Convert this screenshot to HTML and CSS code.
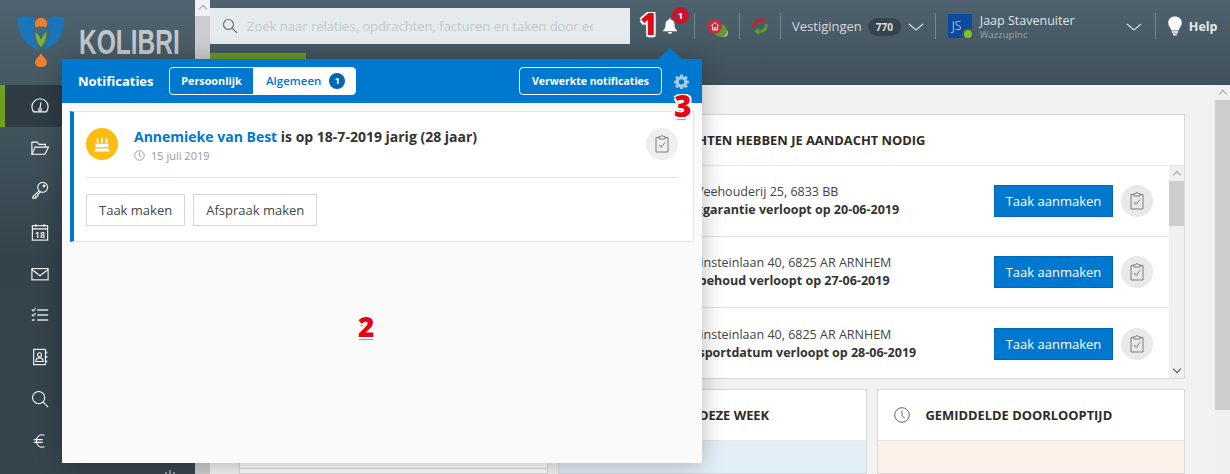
FILE: index.html
```html
<!DOCTYPE html>
<html lang="nl">
<head>
<meta charset="utf-8">
<title>Kolibri</title>
<link rel="stylesheet" href="styles.css">
</head>
<body>
<div class="app">
  <aside class="sidebar">
    <div class="logo">
      <svg class="logo-mark" viewBox="0 0 50 54" width="50" height="54">
        <path d="M2 2C10 0.500 17 1.500 20 6C17 12 16 19 19 27C20 30 21 32 22 35C11 31 1 21 2 2Z" fill="#1b75bb"/>
        <path d="M48 2C40 0.500 33 1.500 30 6C33 12 34 19 31 27C30 30 29 32 28 35C39 31 49 21 48 2Z" fill="#1b75bb"/>
        <circle cx="25" cy="9" r="6.200" fill="#ee7f2d"/>
        <path d="M25 12C30 10 33.500 15 33 22C32.500 27 29 31 25 34C21 31 17.500 27 17 22C16.500 15 20 10 25 12Z" fill="#3d6a86"/>
        <path d="M25 32C21.500 28 19.500 24 19.500 17C22 18.500 24 22 25 25C26 22 28 18.500 30.500 17C30.500 24 28.500 28 25 32Z" fill="#7fb02f"/>
        <path d="M25 38C27 42 31 44 31 47.500C31 50.500 28 52 25 52C22 52 19 50.500 19 47.500C19 44 23 42 25 38Z" fill="#ee7f2d"/>
      </svg>
      <span class="brand">KOLIBRI</span>
    </div>
    <nav class="nav">
      <a class="nav-item active"><svg viewBox="0 0 20 20"><path d="M3 16.500h14C18.500 14.500 19 12.500 19 11A9 9 0 0 0 1 11C1 12.500 1.500 14.500 3 16.500Z"/><circle cx="10" cy="14" r="1.500"/><path d="M10 12.500L11 6"/></svg></a>
      <a class="nav-item"><svg viewBox="0 0 20 20"><path d="M1 17V3.500h6l2 2.500h7v3"/><path d="M1 17L4.500 9H19.500L15.500 17Z"/></svg></a>
      <a class="nav-item"><svg viewBox="0 0 20 20"><circle cx="13" cy="7" r="5.500"/><circle cx="14.500" cy="5.500" r="1"/><path d="M9 11L2 17.500V19H5.500V17H7.500V15L10.500 12.500"/></svg></a>
      <a class="nav-item"><svg viewBox="0 0 20 20"><rect x="1.500" y="3" width="17" height="16"/><path d="M1.500 6.500H18.500M5.500 1V4.500M14.500 1V4.500"/><text x="10" y="16.800" class="cal">18</text></svg></a>
      <a class="nav-item"><svg viewBox="0 0 20 20"><rect x="1" y="4" width="18" height="12.500"/><path d="M1 5L10 12L19 5"/></svg></a>
      <a class="nav-item"><svg viewBox="0 0 20 20"><path d="M1 4L2.500 5.500L5 2.500M1 9.500L2.500 11L5 8"/><path class="thick" d="M7 4.500H19M7 10H19M7 15.500H19M1 15.500H4"/></svg></a>
      <a class="nav-item"><svg viewBox="0 0 20 20"><rect x="3" y="1.500" width="13" height="17"/><circle cx="9.500" cy="7.500" r="2.200"/><path d="M5.500 15C5.500 12 7 11 9.500 11S13.500 12 13.500 15Z"/><path d="M17.500 4V6M17.500 9V11M17.500 14V16"/></svg></a>
      <a class="nav-item"><svg viewBox="0 0 20 20"><circle cx="8.500" cy="8.500" r="6.800"/><path d="M13.500 13.500L19 19"/></svg></a>
      <a class="nav-item"><svg viewBox="0 0 20 20"><path d="M15 3.500C10 2 6 5 6 10S10 18 15 16.500M3 8.500H13M3 11.500H13"/></svg></a>
    </nav>
    <svg class="side-foot" viewBox="0 0 12 4" width="12" height="4"><path d="M5 0h2v4H5zM1 2h2v2H1zM9 2h2v2H9z"/></svg>
  </aside>
  <div class="side-scroll"><span class="arrow-up"></span><div class="side-thumb"></div></div>
  <div class="main">
    <header class="topbar">
      <div class="top-row">
        <div class="search">
          <svg class="search-icon" viewBox="0 0 16 16" width="16" height="16"><circle cx="6.500" cy="6.500" r="5"/><path d="M10.200 10.200L15 15"/></svg>
          <span class="placeholder">Zoek naar relaties, opdrachten, facturen en taken door een zoekterm in te voeren</span>
        </div>
        <div class="bell">
          <svg viewBox="0 0 16 16" width="16" height="16"><path d="M8 0.500C8.800 0.500 9.200 1 9.200 1.800C11.500 2.400 12.500 4 12.500 6.500C12.500 10 13.500 11 15 12.500V13.300H1V12.500C2.500 11 3.500 10 3.500 6.500C3.500 4 4.500 2.400 6.800 1.800C6.800 1 7.200 0.500 8 0.500ZM6 14H10C10 15 9 16 8 16S6 15 6 14Z"/></svg>
          <span class="bell-badge">1</span>
        </div>
        <span class="sep sep-bell"></span>
        <div class="status">
          <span class="dot dot-gray"></span><span class="dot dot-green"></span><span class="dot dot-red"></span>
          <svg class="status-house" viewBox="0 0 10 10" width="10" height="10"><path d="M1 5L5 1.500L9 5M2.500 4.500V9H7.500V4.500M4 9V6.500H6V9"/></svg>
        </div>
        <span class="sep"></span>
        <svg class="sync" viewBox="0 0 18 18" width="18" height="18"><path d="M3 11C2 6 6 2.500 11 3.500" stroke="#c8232c"/><path d="M10.500 0L15 3.800L10 7Z" fill="#c8232c"/><path d="M15 7C16 12 12 15.500 7 14.500" stroke="#5c9a32"/><path d="M8 11L3 14.200L8 18Z" fill="#5c9a32"/></svg>
        <span class="sep"></span>
        <span class="vest">Vestigingen</span>
        <span class="pill">770</span>
        <svg class="chev" viewBox="0 0 16 8" width="16" height="8"><path d="M1 1L8 7L15 1"/></svg>
        <span class="sep sep-user"></span>
        <div class="avatar">JS<span class="online"></span></div>
        <div class="user">
          <span class="user-name">Jaap Stavenuiter</span>
          <span class="user-org">WazzupInc</span>
        </div>
        <svg class="chev chev-user" viewBox="0 0 16 8" width="16" height="8"><path d="M1 1L8 7L15 1"/></svg>
        <span class="sep sep-help"></span>
        <svg class="bulb" viewBox="0 0 14 20" width="14" height="20"><path d="M7 0.500C11 0.500 13.800 3 13.800 6.800C13.800 10 11.500 11.500 10.500 14.500H3.500C2.500 11.500 0.200 10 0.200 6.800C0.200 3 3 0.500 7 0.500ZM3.800 15.300H10.200V16.800H3.800ZM4.500 17.500H9.500L8.500 19.500H5.500Z"/></svg>
        <span class="help">Help</span>
      </div>
      <div class="tab-row"><span class="tab-active"></span></div>
    </header>
    <div class="body-row">
      <div class="content">
        <section class="col-left">
          <div class="card card-left"></div>
          <div class="card card-left-next"></div>
        </section>
        <section class="col-right">
          <div class="card card-big">
            <h2 class="card-title">Deze opdrachten hebben je aandacht nodig</h2>
            <div class="rows">
              <div class="row-list">
                <div class="row">
                  <div class="row-text"><span>Aan de Oud Veehouderij 25, 6833 BB</span><strong>Project bankgarantie verloopt op 20-06-2019</strong></div>
                  <a class="btn-primary">Taak aanmaken</a>
                  <span class="round"><svg class="clip" viewBox="0 0 14 18"><path d="M4 2.500H1V17H13V2.500H10"/><path d="M4 1.500H5.500C5.500 0.500 8.500 0.500 8.500 1.500H10V4H4Z"/><path d="M4 10L6 12.500L10 7.500"/></svg></span>
                </div>
                <div class="row">
                  <div class="row-text"><span>Prof. Albert Einsteinlaan 40, 6825 AR ARNHEM</span><strong>Kopers voorbehoud verloopt op 27-06-2019</strong></div>
                  <a class="btn-primary">Taak aanmaken</a>
                  <span class="round"><svg class="clip" viewBox="0 0 14 18"><path d="M4 2.500H1V17H13V2.500H10"/><path d="M4 1.500H5.500C5.500 0.500 8.500 0.500 8.500 1.500H10V4H4Z"/><path d="M4 10L6 12.500L10 7.500"/></svg></span>
                </div>
                <div class="row">
                  <div class="row-text"><span>Prof. Albert Einsteinlaan 40, 6825 AR ARNHEM</span><strong>Project transportdatum verloopt op 28-06-2019</strong></div>
                  <a class="btn-primary">Taak aanmaken</a>
                  <span class="round"><svg class="clip" viewBox="0 0 14 18"><path d="M4 2.500H1V17H13V2.500H10"/><path d="M4 1.500H5.500C5.500 0.500 8.500 0.500 8.500 1.500H10V4H4Z"/><path d="M4 10L6 12.500L10 7.500"/></svg></span>
                </div>
              </div>
              <div class="row-scroll"><span class="arrow-up"></span><div class="row-thumb"></div><span class="arrow-down"></span></div>
            </div>
          </div>
          <div class="stat-grid">
            <div class="card stat">
              <h2 class="card-title">Opdrachten deze week</h2>
              <div class="stat-body tint-blue"></div>
            </div>
            <div class="card stat">
              <h2 class="card-title"><svg class="title-clock" viewBox="0 0 16 16" width="16" height="16"><circle cx="8" cy="8" r="7.300"/><path d="M8 3.500V8.500L10.500 11"/></svg>Gemiddelde doorlooptijd</h2>
              <div class="stat-body tint-orange"></div>
            </div>
          </div>
        </section>
      </div>
      <div class="page-scroll"><span class="arrow-up"></span><div class="page-thumb"></div></div>
    </div>
  </div>
</div>

<div class="popup">
  <span class="popup-arrow"></span>
  <div class="popup-head">
    <span class="popup-title">Notificaties</span>
    <div class="toggle">
      <span class="toggle-on">Persoonlijk</span>
      <span class="toggle-off">Algemeen <b class="count">1</b></span>
    </div>
    <a class="btn-outline">Verwerkte notificaties</a>
    <svg class="gear" viewBox="0 0 16 16" width="15" height="15"><path fill-rule="evenodd" d="M6.600 0.500H9.400L9.800 2.600L11 3.100L12.800 1.900L14.800 3.900L13.500 5.600L14 6.900L16 7.200V9.800L14 10.200L13.500 11.400L14.800 13.100L12.800 15.100L11 13.900L9.800 14.400L9.400 16H6.600L6.200 14.400L5 13.900L3.200 15.100L1.200 13.100L2.500 11.400L2 10.200L0 9.800V7.200L2 6.900L2.500 5.600L1.200 3.900L3.200 1.900L5 3.100L6.200 2.600ZM8 5.500A2.800 2.800 0 1 0 8 11.100A2.800 2.800 0 1 0 8 5.500Z"/></svg>
  </div>
  <div class="popup-body">
    <article class="note">
      <div class="note-top">
        <span class="cake"><svg viewBox="0 0 16 16" width="16" height="16"><path d="M3.500 1.500L4.300 3V7H2.700V3ZM8 0.500L8.800 2.300V7H7.200V2.300ZM12.500 1.500L13.300 3V7H11.700V3Z"/><path d="M1.500 7.800H14.500V10.500C13 11.800 12 11.800 10.500 10.700C9 11.800 7 11.800 5.500 10.700C4 11.800 3 11.800 1.500 10.500ZM1.500 12C3 13 4 13 5.500 12C7 13 9 13 10.500 12C12 13 13 13 14.500 12V14H15.500V15.500H0.500V14H1.500Z"/></svg></span>
        <div class="note-text">
          <p class="note-title"><a>Annemieke van Best</a> is op 18-7-2019 jarig (28 jaar)</p>
          <p class="note-date"><svg viewBox="0 0 12 12" width="11" height="11"><circle cx="6" cy="6" r="5.200"/><path d="M6 2.800V6.300L8 8.300"/></svg>15 juli 2019</p>
        </div>
        <span class="round round-note"><svg class="clip" viewBox="0 0 14 18"><path d="M4 2.500H1V17H13V2.500H10"/><path d="M4 1.500H5.500C5.500 0.500 8.500 0.500 8.500 1.500H10V4H4Z"/><path d="M4 10L6 12.500L10 7.500"/></svg></span>
      </div>
      <div class="note-actions">
        <a class="btn-plain">Taak maken</a>
        <a class="btn-plain">Afspraak maken</a>
      </div>
    </article>
  </div>
</div>

<span class="marker marker-1">1</span>
<span class="marker marker-2">2</span>
<span class="marker marker-3">3</span>
</body>
</html>
```
FILE: styles.css
```css
* { box-sizing: border-box; }
html, body { margin: 0; padding: 0; width: 1230px; height: 474px; overflow: hidden; }
body { font-family: "Open Sans", "Liberation Sans", sans-serif; color: #333; position: relative; background: #f2f2f2; }
p, h2 { margin: 0; }

.app { display: flex; width: 1230px; height: 474px; overflow: hidden; }

/* sidebar */
.sidebar { width: 195px; flex: none; position: relative; background: linear-gradient(#4e636f 0, #33434b 260px, #36454d 474px); overflow: hidden; }
.logo { height: 85px; display: flex; align-items: flex-start; padding: 15px 0 0 16px; }
.logo-mark { flex: none; }
.brand { font-family: "Liberation Sans", sans-serif; font-weight: 700; font-size: 35px; line-height: 40px; margin: 7px 0 0 13px; color: #c1c7cb; display: inline-block; transform: scaleX(.7); transform-origin: left center; }
.nav { display: flex; flex-direction: column; }
.nav-item { height: 41.900px; display: flex; align-items: center; padding-left: 31px; }
.nav-item.active { background: #2f3c44; border-left: 5px solid #6fa01f; padding-left: 26px; }
.nav-item svg { width: 18px; height: 18px; fill: none; stroke: #fff; stroke-width: 1.200; overflow: visible; }
.nav-item svg .thick { stroke-width: 1.800; stroke: #dfe3e5; }
.nav-item svg .cal { fill: #fff; stroke: none; font-size: 10px; font-weight: 600; text-anchor: middle; font-family: "Open Sans", sans-serif; }
.side-foot { position: absolute; right: 19px; bottom: 0; fill: #8a979e; }

/* scrollbars */
.side-scroll { width: 15px; flex: none; background: #f0f0f0; display: flex; flex-direction: column; align-items: center; }
.side-thumb { width: 15px; flex: 1; background: #cdcdcd; margin-top: 4px; }
.arrow-up, .arrow-down { width: 6px; height: 6px; flex: none; border-left: 1.500px solid #a3a3a3; border-top: 1.500px solid #a3a3a3; transform: rotate(45deg); margin-top: 6px; }
.arrow-down { transform: rotate(225deg); margin-top: auto; margin-bottom: 6px; border-color: #505050; }

/* top bar */
.main { flex: 1; min-width: 0; display: flex; flex-direction: column; }
.topbar { height: 85px; flex: none; background: linear-gradient(#4e636f, #3f505a); display: flex; flex-direction: column; }
.top-row { height: 53px; flex: none; display: flex; align-items: center; position: relative; }
.tab-row { flex: 1; }
.tab-active { display: block; width: 96px; height: 6px; background: #6a9b21; }
.search { width: 420px; height: 36px; background: #e5eaed; display: flex; align-items: center; padding-left: 12px; flex: none; align-self: flex-start; margin-top: 8px; }
.search-icon { fill: none; stroke: #6e7478; stroke-width: 1.200; flex: none; }
.placeholder { margin-left: 9px; width: 346px; overflow: hidden; white-space: nowrap; color: #c3c8cb; font-size: 13px; }
.bell { position: relative; width: 16px; height: 16px; margin-left: 32px; margin-bottom: 1px; flex: none; }
.bell svg { fill: #fff; display: block; }
.bell-badge { position: absolute; left: 10px; top: -11px; width: 17px; height: 17px; border-radius: 50%; background: #c6152d; color: #fff; font-size: 9.500px; font-weight: 700; line-height: 17px; text-align: center; }
.sep { width: 1px; height: 26px; background: #75868f; flex: none; margin-bottom: 1px; }
.sep-bell { margin-left: 16px; }
.status { position: relative; width: 44px; height: 26px; flex: none; }
.dot { position: absolute; border-radius: 50%; }
.dot-gray { left: 25px; top: 15px; width: 8px; height: 8px; background: #a9acad; }
.dot-green { left: 19px; top: 10px; width: 13px; height: 13px; background: #5d9a35; }
.dot-red { left: 12px; top: 5px; width: 15px; height: 15px; background: #d1273f; opacity: .88; }
.status-house { position: absolute; left: 15px; top: 7px; fill: none; stroke: #fff; stroke-width: .8; }
.sync { fill: none; stroke-width: 3; margin: 0 11px; flex: none; margin-bottom: 1px; }
.sync path[fill] { stroke: none; }
.vest { margin-left: 11px; font-size: 13px; color: #d5dadd; flex: none; margin-bottom: 1px; }
.pill { margin-left: 6px; width: 33px; height: 18px; border-radius: 9px; background: #37444c; color: #dde1e3; font-size: 10px; font-weight: 700; line-height: 18px; text-align: center; flex: none; }
.chev { fill: none; stroke: #d5dadd; stroke-width: 1.200; margin-left: 7px; flex: none; }
.sep-user { margin-left: 11px; }
.avatar { position: relative; margin-left: 12px; width: 24px; height: 24px; background: #0b4a9e; color: #e6eef7; font-size: 12px; font-weight: 300; line-height: 24px; padding-left: 4px; flex: none; margin-bottom: 1px; }
.online { position: absolute; left: 14px; top: 14px; width: 12px; height: 12px; border-radius: 50%; background: #7ec422; border: 2px solid #46575f; }
.user { margin-left: 8px; width: 138px; display: flex; flex-direction: column; flex: none; }
.user-name { font-size: 12.500px; line-height: 16px; color: #dfe3e5; margin-top: -1px; }
.user-org { font-size: 9.500px; line-height: 11px; color: #9ba6ac; }
.chev-user { margin-left: 8px; }
.sep-help { margin-left: 13px; }
.bulb { fill: #fff; margin-left: 12px; flex: none; margin-bottom: 1px; }
.help { margin-left: 7px; font-size: 12.500px; font-weight: 700; color: #e6e9eb; flex: none; margin-bottom: 1px; }

/* page content */
.body-row { flex: 1; min-height: 0; display: flex; }
.content { flex: 1; min-width: 0; background: #f2f2f2; padding: 29px 30px 0 29px; display: flex; gap: 10px; overflow: hidden; }
.page-scroll { width: 15px; flex: none; background: #f0f0f0; display: flex; flex-direction: column; align-items: center; }
.page-thumb { width: 15px; height: 310px; background: #cdcdcd; margin-top: 3px; }
.col-left { width: 309px; flex: none; display: flex; flex-direction: column; }
.col-right { flex: 1; min-width: 0; display: flex; flex-direction: column; gap: 10px; }
.card { background: #fff; border: 1px solid #d8d8d8; flex: none; }
.card-left { height: 355px; }
.card-left-next { flex: 1; border-top: 0; }
.card-big { height: 265px; display: flex; flex-direction: column; }
.card-title { height: 51px; flex: none; display: flex; align-items: center; padding-left: 48px; font-size: 12.900px; font-weight: 700; text-transform: uppercase; color: #2f2a26; border-bottom: 1px solid #e8e8e8; position: relative; }
.card-big .card-title { padding-left: 50px; }
.title-clock { position: absolute; left: 16px; top: 17px; fill: none; stroke: #555; stroke-width: .9; }
.rows { flex: 1; display: flex; min-height: 0; }
.row-list { flex: 1; min-width: 0; }
.row { height: 71px; display: flex; align-items: center; border-bottom: 1px solid #e4e4e4; padding-left: 65px; }
.row:last-child { border-bottom: 0; }
.row-text { flex: 1; min-width: 0; display: flex; flex-direction: column; font-size: 12.500px; line-height: 18px; color: #444; white-space: nowrap; }
.row-text strong { font-weight: 700; color: #333; }
.btn-primary { width: 119px; height: 32px; background: #0078cf; border: 1px solid #0068b5; color: #fff; font-size: 13px; line-height: 30px; text-align: center; flex: none; }
.round { width: 32px; height: 32px; border-radius: 50%; background: #e9e9e9; display: flex; align-items: center; justify-content: center; margin: 0 16px 0 8px; flex: none; }
.clip { width: 14px; height: 18px; fill: none; stroke: #7c7c7c; stroke-width: 1; }
.row-scroll { width: 15px; flex: none; background: #f0f0f0; display: flex; flex-direction: column; align-items: center; }
.row-thumb { width: 15px; height: 45px; background: #cdcdcd; margin-top: 3px; }
.stat-grid { display: grid; grid-template-columns: 1fr 1fr; gap: 10px; flex: 1; }
.stat { display: flex; flex-direction: column; }
.stat-body { flex: 1; }
.tint-blue { background: #e3eff8; }
.tint-orange { background: #fbf1e8; }

/* popup */
.popup { position: absolute; left: 62px; top: 59px; width: 640px; height: 404px; background: #fafafa; box-shadow: 0 2px 22px rgba(0,0,0,.28); display: flex; flex-direction: column; }
.popup-arrow { position: absolute; left: 596px; top: -11px; width: 0; height: 0; border-left: 12px solid transparent; border-right: 12px solid transparent; border-bottom: 11px solid #0078cf; }
.popup-head { height: 44px; flex: none; background: #0078cf; display: flex; align-items: center; padding-left: 16px; }
.popup-title { color: #fff; font-size: 13px; font-weight: 700; width: 91px; flex: none; }
.toggle { display: flex; width: 187px; height: 28px; border: 1px solid #fff; border-radius: 4px; overflow: hidden; flex: none; background: #fff; }
.toggle-on { width: 83px; background: #0078cf; color: #fff; font-size: 10.800px; font-weight: 700; line-height: 26px; text-align: center; flex: none; }
.toggle-off { flex: 1; color: #0078cf; font-size: 11.500px; font-weight: 600; line-height: 26px; padding-left: 13px; display: flex; align-items: center; gap: 8px; }
.count { width: 16px; height: 16px; border-radius: 50%; background: #0067b3; color: #fff; font-size: 9px; line-height: 16px; text-align: center; font-weight: 700; }
.btn-outline { margin-left: 163px; width: 143px; height: 28px; border: 1px solid #fff; border-radius: 4px; color: #fff; font-size: 10.500px; font-weight: 700; line-height: 26px; text-align: center; flex: none; }
.gear { margin-left: 12px; fill: #9dcdf0; flex: none; }
.popup-body { flex: 1; padding: 8px 8px 0; }
.note { height: 131px; background: #fff; border: 1px solid #e4e4e4; border-left: 4px solid #0078cf; padding: 0 0 0 12px; display: flex; flex-direction: column; }
.note-top { height: 66px; display: flex; align-items: flex-start; padding-top: 16px; border-bottom: 1px solid #e4e4e4; margin-right: 15px; flex: none; }
.cake { width: 32px; height: 32px; border-radius: 50%; background: #fdbd10; display: flex; align-items: center; justify-content: center; flex: none; }
.cake svg { fill: #fff; }
.note-text { flex: 1; margin-left: 16px; margin-top: -1px; }
.note-title { font-size: 14px; font-weight: 700; line-height: 20px; color: #333; }
.note-title a { color: #0078cf; }
.note-date { font-size: 11px; color: #999; line-height: 15px; margin-top: 1px; display: flex; align-items: center; gap: 6px; }
.note-date svg { fill: none; stroke: #999; stroke-width: 1; }
.round-note { background: #efefef; margin: 0; }
.note-actions { display: flex; gap: 8px; padding-top: 16px; }
.btn-plain { height: 32px; border: 1px solid #d5d5d5; background: #fff; font-size: 13px; line-height: 30px; color: #444; padding: 0 12px; }

/* annotation markers */
.marker { position: absolute; font-family: "Open Sans", sans-serif; font-weight: 800; color: #e30613; line-height: 1; text-shadow: 1px 0 0 #fff, -1px 0 0 #fff, 0 1px 0 #fff, 0 -1px 0 #fff, 1.500px 1.500px 0 #fff, -1.500px 1.500px 0 #fff, 1.500px -1.500px 0 #fff, -1.500px -1.500px 0 #fff, 0 2.500px 1px #999; font-size: 30px; }
.marker-1 { left: 640px; top: 9px; }
.marker-2 { left: 358px; top: 312px; font-size: 28px; }
.marker-3 { left: 674px; top: 91px; }
```
